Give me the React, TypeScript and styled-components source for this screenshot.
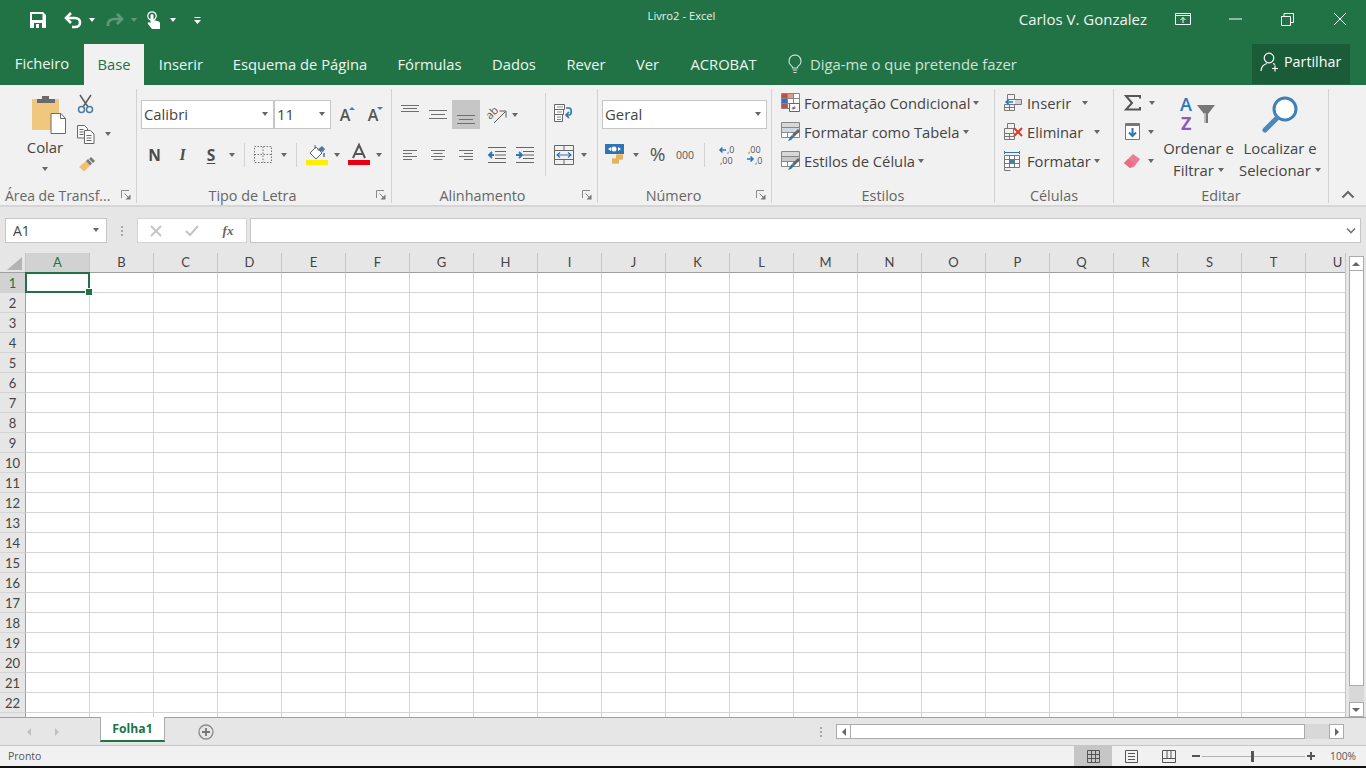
import React from "react";
import styled, { createGlobalStyle } from "styled-components";

const UI = `"Open Sans", "Noto Sans", "Liberation Sans", sans-serif`;
const GREEN = "#217346";
const INK = "#444444";
const MUTED = "#666666";

const Global = createGlobalStyle`
  html, body { margin: 0; padding: 0; background: #fff; overflow: hidden; }
  #root { width: 1366px; height: 768px; }
  * { box-sizing: border-box; }
`;

const Page = styled.div`
  width: 1366px; height: 768px; display: flex; flex-direction: column; overflow: hidden;
  font-family: ${UI}; color: ${INK}; background: #e6e6e6;
`;

/* ---------- title bar ---------- */
const TitleBar = styled.header`
  height: 44px; flex: none; background: ${GREEN}; display: grid; grid-template-columns: 647px 69px 1fr; align-items: start; color: #fff;
`;
const Qat = styled.div`display: flex; align-items: center; height: 40px; padding-left: 30px;`;
const QatSlot = styled.div<{ $ml?: number }>`margin-left: ${p => p.$ml ?? 0}px; display: flex; align-items: center; justify-content: center; flex: none;`;
const DocTitle = styled.div`font-size: 11.2px; line-height: 32px; white-space: nowrap; color: #e8f1ec; text-align: center;`;
const TitleRight = styled.div`display: flex; align-items: center; height: 38px; justify-content: flex-end; padding-right: 19px;`;
const UserName = styled.div`font-size: 15px; color: #f0f5f2; margin-right: 28px; white-space: nowrap;`;
const WinBtn = styled.div<{ $w: number }>`width: ${p => p.$w}px; height: 38px; display: flex; align-items: center; justify-content: flex-end;`;

const WhiteCaret = styled.span<{ $dim?: boolean }>`
  display: block; width: 0; height: 0; border-left: 3.5px solid transparent; border-right: 3.5px solid transparent;
  border-top: 4px solid ${p => (p.$dim ? "#5f9a79" : "#fff")};
`;

/* ---------- tabs ---------- */
const TabBar = styled.nav`height: 41px; flex: none; background: ${GREEN}; display: flex; align-items: stretch; position: relative;`;
const Tab = styled.div<{ $w: number; $active?: boolean; $lift?: boolean }>`
  width: ${p => p.$w}px; display: flex; align-items: center; justify-content: center; font-size: 14.75px; white-space: nowrap;
  padding-bottom: ${p => (p.$lift ? 4 : 2)}px; color: ${p => (p.$active ? GREEN : "#eef5f1")}; background: ${p => (p.$active ? "#f1f1f1" : "transparent")};
`;
const TellMe = styled.div`display: flex; align-items: center; gap: 7px; margin-left: 14px; padding-bottom: 2px; font-size: 14.85px; color: #cfe2d7; white-space: nowrap;`;
const Share = styled.div`
  position: absolute; left: 1252px; top: 0; width: 98px; height: 40px; background: #1a5c38; color: #fff; display: flex; align-items: center; gap: 4px;
  padding: 0 0 5px 8px; font-size: 14.3px;
`;

/* ---------- ribbon ---------- */
const Ribbon = styled.section`height: 122px; flex: none; background: #f1f1f1; display: flex; align-items: flex-start; padding-top: 4px; border-bottom: 2px solid #d6d6d6;`;
const Group = styled.div<{ $w: number }>`width: ${p => p.$w}px; height: 114px; flex: none; display: flex; flex-direction: column; border-right: 1px solid #d2d2d2; position: relative;`;
const GroupBody = styled.div`height: 96px; display: flex;`;
const GroupFooter = styled.div<{ $left?: boolean; $shift?: number }>`
  height: 18px; font-size: ${p => (p.$left ? 13.9 : 14.4)}px; line-height: 22px; color: ${MUTED}; white-space: nowrap;
  text-align: ${p => (p.$left ? "left" : "center")}; padding-left: ${p => (p.$left ? 5 : 0)}px;
  padding-right: ${p => p.$shift ?? 0}px;
`;
const Launcher = styled.span`position: absolute; right: 5px; bottom: 3px; width: 10px; height: 10px; display: block;`;
const Stack = styled.div<{ $pl?: number; $pt?: number; $w?: number; $mt?: number }>`
  display: flex; flex-direction: column; padding-left: ${p => p.$pl ?? 0}px; padding-top: ${p => p.$pt ?? 0}px; margin-top: ${p => p.$mt ?? 0}px; ${p => (p.$w ? `width: ${p.$w}px;` : "")} flex: none;
`;
const Line = styled.div<{ $h?: number; $mt?: number }>`display: flex; align-items: center; height: ${p => p.$h ?? 29}px; margin-top: ${p => p.$mt ?? 0}px;`;
const Slot = styled.div<{ $w: number; $on?: boolean; $h?: number }>`
  width: ${p => p.$w}px; height: ${p => p.$h ?? 29}px; flex: none; display: flex; align-items: center; justify-content: center; position: relative;
  background: ${p => (p.$on ? "#c6c6c6" : "transparent")};
`;
const Caret = styled.span`
  width: 0; height: 0; border-left: 3.5px solid transparent; border-right: 3.5px solid transparent; border-top: 4px solid #666; flex: none; display: inline-block;
`;
const Divider = styled.span<{ $h?: number; $ml?: number; $mr?: number }>`
  width: 1px; height: ${p => p.$h ?? 24}px; background: #d2d2d2; flex: none; margin-left: ${p => p.$ml ?? 0}px; margin-right: ${p => p.$mr ?? 0}px;
`;
const Combo = styled.div<{ $w: number }>`
  width: ${p => p.$w}px; height: 29px; background: #fff; border: 1px solid #c6c6c6;
  display: flex; align-items: center; justify-content: space-between; padding: 0 5px 1px 2px; font-size: 14.85px; color: ${INK}; flex: none;
`;
const BigLabel = styled.div`font-size: 14.85px; color: ${INK}; text-align: center; line-height: 22px; white-space: nowrap; display: flex; align-items: center; justify-content: center; gap: 4px;`;
const ColarCol = styled.div`width: 72px; padding-left: 18px; flex: none; display: flex; flex-direction: column; align-items: center; padding-top: 6px;`;
const ColarIcon = styled.div`margin-left: 6px; margin-bottom: 1px;`;
const CaretSlot = styled.div`height: 22px; display: flex; align-items: center;`;
const FontBtn = styled.span<{ $i?: boolean; $u?: boolean }>`
  font-size: ${p => (p.$i ? 16 : 15.5)}px; font-weight: 700; color: #4d4d4d; font-style: ${p => (p.$i ? "italic" : "normal")};
  font-family: ${p => (p.$i ? `"Liberation Serif", serif` : UI)}; text-decoration: ${p => (p.$u ? "underline" : "none")}; text-underline-offset: 2px;
`;
const GrowA = styled.span`font-size: 16px; color: #555; line-height: 1; font-weight: 600;`;
const SizeMark = styled.span<{ $up?: boolean }>`
  position: absolute; right: 4px; top: 7px; width: 0; height: 0; border-left: 3px solid transparent; border-right: 3px solid transparent;
  ${p => (p.$up ? "border-bottom: 3px solid #4a7ca8;" : "border-top: 3px solid #4a7ca8;")}
`;
const Percent = styled.span`font-size: 19px; color: #555; line-height: 1;`;
const Thousands = styled.span`font-size: 10.5px; color: #555;`;
const StyleRow = styled.div<{ $iw: number }>`
  display: grid; grid-template-columns: ${p => p.$iw}px auto 7px; column-gap: 3px; align-items: center; height: 29px; font-size: 14.75px; color: ${INK}; white-space: nowrap; width: max-content;
`;
const StyleStack = styled.div<{ $pl: number }>`padding-left: ${p => p.$pl}px; margin-top: -1px; display: flex; flex-direction: column;`;
const BigBtn = styled.div<{ $w: number }>`width: ${p => p.$w}px; flex: none; display: flex; flex-direction: column; align-items: center; padding-top: 6px;`;
const BigIcon = styled.div`height: 42px; display: flex; align-items: flex-start; justify-content: center;`;
const Collapse = styled.div`flex: 1; display: flex; align-items: flex-end; justify-content: flex-end; padding: 0 11px 4px 0; height: 114px;`;

/* ---------- formula bar ---------- */
const FormulaBar = styled.div`height: 46px; flex: none; background: #e6e6e6; display: flex; align-items: flex-start; padding: 11px 5px 0 5px;`;
const NameBox = styled.div`
  width: 102px; height: 25px; background: #fff; border: 1px solid #c6c6c6; display: flex; align-items: center; justify-content: space-between;
  padding: 0 7px 1px 7px; font-size: 14px; color: ${INK}; flex: none;
`;
const Dots = styled.div`width: 30px; height: 25px; flex: none; display: flex; flex-direction: column; align-items: center; justify-content: center; gap: 2px;`;
const Dot = styled.span`width: 2px; height: 2px; background: #a8a8a8; display: block;`;
const FxBox = styled.div`
  width: 110px; height: 25px; background: #fff; border: 1px solid #d4d4d4; display: flex; align-items: center; flex: none; margin-right: 3px;
`;
const FxSlot = styled.div`width: 36px; height: 23px; display: flex; align-items: center; justify-content: center;`;
const FxText = styled.span`font-family: "Liberation Serif", serif; font-style: italic; font-weight: 700; font-size: 13px; color: #666;`;
const FormulaInput = styled.div`flex: 1; height: 25px; background: #fff; border: 1px solid #c6c6c6; display: flex; align-items: center; justify-content: flex-end; padding-right: 4px;`;

/* ---------- sheet ---------- */
const SheetWrap = styled.div`height: 464px; flex: none; display: flex; background: #fff;`;
const Sheet = styled.div`width: 1345px; height: 464px; overflow: hidden; flex: none; font-family: "Lato", "Liberation Sans", sans-serif;`;
const Row = styled.div`display: flex; width: 1370px; height: 20px;`;
const Corner = styled.div`width: 26px; height: 20px; flex: none; background: #e6e6e6; border-right: 1px solid #c6c6c6; border-bottom: 1px solid #9f9f9f; display: flex; align-items: flex-end; justify-content: flex-end; padding: 0 3px 2px 0;`;
const ColHead = styled.div<{ $on?: boolean }>`
  width: 64px; height: 20px; flex: none; background: ${p => (p.$on ? "#d2d2d2" : "#e6e6e6")}; color: ${p => (p.$on ? GREEN : "#444")};
  border-right: 1px solid #c6c6c6; border-bottom: 1px solid ${p => (p.$on ? GREEN : "#9f9f9f")}; font-size: 13px; line-height: 19px; text-align: center;
`;
const RowHead = styled.div<{ $on?: boolean }>`
  width: 26px; height: 20px; flex: none; background: ${p => (p.$on ? "#d2d2d2" : "#e6e6e6")}; color: ${p => (p.$on ? GREEN : "#444")};
  border-right: 1px solid ${p => (p.$on ? GREEN : "#9f9f9f")}; border-bottom: 1px solid #d4d4d4; font-size: 13px; line-height: 20px; text-align: center;
`;
const Cell = styled.div`width: 64px; height: 20px; flex: none; border-right: 1px solid #d4d4d4; border-bottom: 1px solid #d4d4d4; background: #fff; position: relative;`;
const Selection = styled.div`position: absolute; left: -1px; top: -1px; width: 65px; height: 21px; border: 2px solid ${GREEN}; z-index: 2;`;
const Handle = styled.span`position: absolute; right: -4px; bottom: -4px; width: 6px; height: 6px; background: ${GREEN}; outline: 1px solid #fff;`;

const VScroll = styled.div`width: 21px; flex: none; background: #e6e6e6; border-left: 1px solid #c6c6c6; display: flex; flex-direction: column; align-items: center; padding-top: 3px;`;
const SBtn = styled.div`
  width: 15px; height: 15px; background: #fff; border: 1px solid #ababab; display: flex; align-items: center; justify-content: center; flex: none;
`;
const VThumb = styled.div`width: 15px; height: 416px; margin-top: -1px; background: #fff; border: 1px solid #ababab; flex: none;`;
const VGap = styled.div`width: 15px; flex: 1; background: #d8d8d8;`;
const ArrowUp = styled.span`width: 0; height: 0; border-left: 4px solid transparent; border-right: 4px solid transparent; border-bottom: 4px solid #666;`;
const ArrowDown = styled.span`width: 0; height: 0; border-left: 4px solid transparent; border-right: 4px solid transparent; border-top: 4px solid #666;`;
const ArrowLeft = styled.span<{ $c?: string }>`width: 0; height: 0; border-top: 4px solid transparent; border-bottom: 4px solid transparent; border-right: 4px solid ${p => p.$c ?? "#666"};`;
const ArrowRight = styled.span<{ $c?: string }>`width: 0; height: 0; border-top: 4px solid transparent; border-bottom: 4px solid transparent; border-left: 4px solid ${p => p.$c ?? "#666"};`;

/* ---------- sheet tabs ---------- */
const SheetTabs = styled.div`height: 28px; flex: none; background: #e6e6e6; border-top: 1px solid #9f9f9f; display: flex; align-items: flex-start;`;
const NavArrows = styled.div`width: 100px; height: 27px; flex: none; display: flex; align-items: center; padding-left: 27px; gap: 24px;`;
const SheetTab = styled.div`
  width: 65px; height: 25px; margin-top: -1px; flex: none; background: #fff; border-left: 1px solid #ababab; border-right: 1px solid #ababab; border-bottom: 2px solid ${GREEN};
  color: ${GREEN}; font-weight: 700; font-size: 12.2px; display: flex; align-items: center; justify-content: center;
`;
const AddSlot = styled.div`width: 82px; height: 27px; flex: none; display: flex; align-items: center; justify-content: center;`;
const TabDots = styled.div`margin-left: auto; width: 21px; height: 27px; flex: none; display: flex; flex-direction: column; align-items: center; justify-content: center; gap: 2px; margin-right: -2px;`;
const HScroll = styled.div`width: 508px; margin-right: 22px; margin-left: 7px; height: 15px; margin-top: 6px; display: flex; flex: none; background: #d8d8d8;`;
const HThumb = styled.div`width: 455px; height: 15px; margin-left: -1px; background: #fff; border: 1px solid #ababab; flex: none;`;
const HGap = styled.div`flex: 1;`;

/* ---------- status ---------- */
const StatusBar = styled.footer`height: 21px; flex: none; background: #f1f1f1; border-top: 1px solid #c6c6c6; display: flex; align-items: center; font-size: 10.5px; color: #555; padding-left: 8px;`;
const StatusRight = styled.div`margin-left: auto; display: flex; align-items: center; height: 20px;`;
const ViewBtn = styled.div<{ $on?: boolean }>`width: 38px; height: 20px; display: flex; align-items: center; justify-content: center; background: ${p => (p.$on ? "#c6c6c6" : "transparent")};`;
const ZoomSlider = styled.div`display: flex; align-items: center; margin-left: 4px; width: 123px; height: 20px;`;
const ZoomSign = styled.span`width: 8px; height: 2px; background: #555; flex: none; position: relative;`;
const ZoomPlusBar = styled.span`position: absolute; left: 3px; top: -3px; width: 2px; height: 8px; background: #555;`;
const ZoomTrack = styled.div`flex: 1; height: 1px; background: #b4b4b4; position: relative; margin: 0 2px;`;
const ZoomThumb = styled.span`position: absolute; left: 49px; top: -5px; width: 3px; height: 11px; background: #555;`;
const ZoomValue = styled.span`width: 51px; text-align: right; padding-right: 10px; font-size: 10.2px; color: #555;`;
const BottomEdge = styled.div`height: 2px; flex: none; background: #111;`;

/* ---------- icons ---------- */
const S = (p: { w: number; h: number; children: React.ReactNode }) => (
  <svg width={p.w} height={p.h} viewBox={`0 0 ${p.w} ${p.h}`} fill="none" style={{ display: "block", flex: "none", overflow: "visible" }}>{p.children}</svg>
);
const Save = () => (
  <S w={16} h={16}>
    <path d="M0 0h13l3 3v13H0z" fill="#fff" />
    <path d="M2 2h10.500v6H2z" fill={GREEN} />
    <path d="M4 11h8v5H4z" fill={GREEN} />
    <path d="M6 12h3v4H6z" fill="#fff" />
  </S>
);
const Undo = () => (
  <S w={18} h={16}><path d="M7 1L2 6l5 5" stroke="#fff" strokeWidth="2.6" /><path d="M3 6h8c3 0 5 2 5 4.500S14 15 11 15H8" stroke="#fff" strokeWidth="2.6" /></S>
);
const Redo = () => (
  <S w={18} h={16}><path d="M11 2l5 5-5 5" stroke="#5f9a79" strokeWidth="2.6" /><path d="M15 7H8c-3 0-6 2-6 5v2" stroke="#5f9a79" strokeWidth="2.6" /></S>
);
const Touch = () => (
  <S w={15} h={19}>
    <circle cx="6" cy="5" r="4.200" stroke="#fff" strokeWidth="1.200" />
    <path d="M4.500 4.500a1.500 1.500 0 013 0V9l4.500 1.300c1.200.4 2 1 2 2.400V18H6l-4-5c-.8-1 .4-2.300 1.500-1.500l1 .8z" fill="#fff" />
  </S>
);
const CustomQat = () => (
  <S w={7} h={7}><path d="M0.500 .5h6" stroke="#fff" /><path d="M0 3h7L3.500 7z" fill="#fff" /></S>
);
const RibbonOpt = () => (
  <S w={16} h={12}><path d="M.5.5h15v11H.5z" stroke="#fff" /><path d="M.5 2.500h15" stroke="#fff" /><path d="M8 10V4.500M5.500 7L8 4.500 10.500 7" stroke="#fff" /></S>
);
const Minimize = () => <S w={13} h={2}><path d="M0 1h13" stroke="#fff" /></S>;
const Restore = () => <S w={13} h={13}><path d="M.5 3.500h9v9h-9z" stroke="#fff" /><path d="M3 3.500v-3h9.500v9H9.500" stroke="#fff" /></S>;
const Close = () => <S w={14} h={14}><path d="M1 1l12 12M13 1L1 13" stroke="#fff" /></S>;
const Bulb = () => (
  <S w={16} h={20}>
    <path d="M8 1a6 6 0 00-3.400 10.900c.6.5.9 1.200.9 2.100h5c0-.9.3-1.600.9-2.100A6 6 0 008 1z" stroke="#d8e7de" strokeWidth="1.100" />
    <path d="M5.800 16h4.400M6.500 18.500h3" stroke="#d8e7de" strokeWidth="1.200" />
  </S>
);
const SharePerson = () => (
  <S w={20} h={20}>
    <circle cx="9" cy="6" r="4.800" stroke="#fff" strokeWidth="1.200" />
    <path d="M1 19c0-4 3-7 6-7.500M13 11.500c.8.300 1.500.7 2 1.200" stroke="#fff" strokeWidth="1.200" />
    <path d="M15 13.500v6M12 16.500h6" stroke="#fff" strokeWidth="1.200" />
  </S>
);
const Clipboard = () => (
  <S w={36} h={40}>
    <path d="M2 4h27v31H2z" fill="#f0c77f" />
    <path d="M7 4h5V1h7v3h6v4H7z" fill="#6a6a6a" />
    <path d="M21 18.500h10l4.500 5v15H21z" fill="#fff" stroke="#6a6a6a" />
    <path d="M30.500 18.500v5h5" stroke="#6a6a6a" />
  </S>
);
const Scissors = () => (
  <S w={18} h={20}>
    <path d="M3 1l8 12M14 1L6 13" stroke="#5c5c5c" strokeWidth="1.500" />
    <circle cx="4.500" cy="15.500" r="3" stroke="#4a7ca8" strokeWidth="1.500" />
    <circle cx="12.500" cy="15.500" r="3" stroke="#4a7ca8" strokeWidth="1.500" />
  </S>
);
const Copy = () => (
  <S w={18} h={19}>
    <path d="M.5.5h7l3 3V13H.5z" fill="#f8f8f8" stroke="#666" />
    <path d="M7.500 5.500h6l3.500 3.500v9.500H7.500z" fill="#fff" stroke="#666" />
    <path d="M2.500 4.500h4M2.500 7h4M2.500 9.500h4M9.500 10.500h5M9.500 13h5M9.500 15.500h5" stroke="#666" />
  </S>
);
const Brush = () => (
  <S w={18} h={16}>
    <path d="M1 11l7-6 4 4.500-6 6z" fill="#eebf75" />
    <path d="M8 5l2-2 4 4.500-2 2z" fill="#777" />
    <path d="M11 3l2-2 4 4-2 2z" fill="#777" />
  </S>
);
const Launch = () => (
  <S w={10} h={10}>
    <path d="M.5 8V.5H8" stroke="#8a8a8a" />
    <path d="M3.500 3.500L8 8" stroke="#777" />
    <path d="M9.500 4.500v5h-5z" fill="#777" />
  </S>
);
const Borders = () => (
  <S w={18} h={17}>
    <path d="M.5.500h17v16H.5zM.5 8.500h17M9 .5v16" stroke="#777" strokeDasharray="1.500 1.500" />
  </S>
);
const FillBucket = () => (
  <S w={22} h={21}>
    <path d="M4 9l6-6 6 6-6 6z" fill="#fff" stroke="#666" />
    <path d="M9 5V1" stroke="#666" />
    <path d="M11 6l5-4 3 3-2 3" fill="#4a7ca8" />
    <path d="M18 9v4" stroke="#4a7ca8" strokeWidth="1.600" />
    <path d="M0 16h22v5H0z" fill="#ffee00" />
  </S>
);
const FontColor = () => (
  <S w={22} h={21}>
    <path d="M5 14L11 1l6 13M7.500 10h7" stroke="#555" strokeWidth="2" />
    <path d="M0 16h22v5H0z" fill="#e60012" />
  </S>
);
const Lines = ({ rows, widths = [18, 14, 18] }: { rows: number[]; widths?: number[] }) => (
  <S w={18} h={22}>
    {rows.map((y, i) => {
      const w = widths[i] ?? 18;
      return <path key={y} d={`M${(18 - w) / 2} ${y + 0.5}h${w}`} stroke="#6f6f6f" />;
    })}
  </S>
);
const HLines = ({ align }: { align: "l" | "c" | "r" }) => {
  const ws = [14, 9, 14, 9];
  return (
    <S w={14} h={12}>
      {ws.map((w, i) => {
        const x = align === "l" ? 0 : align === "c" ? (14 - w) / 2 : 14 - w;
        return <path key={i} d={`M${x} ${i * 3 + 1.500}h${w}`} stroke="#6f6f6f" />;
      })}
    </S>
  );
};
const Orient = () => (
  <S w={20} h={20}>
    <text x="0" y="0" transform="translate(3 15) rotate(-45)" fontFamily="Open Sans" fontSize="11" fill="#5a5a5a">ab</text>
    <path d="M7 18L18 7M12.500 6H19v6.500" stroke="#5a5a5a" />
  </S>
);
const Indent = ({ inc }: { inc?: boolean }) => (
  <S w={18} h={16}>
    <path d="M0 .5h18M7 4.500h11M7 8h11M7 11.500h11M0 15.500h18" stroke="#666" />
    {inc
      ? <path d="M0 8h5M3 5l3 3-3 3" stroke="#2f75b5" strokeWidth="1.800" />
      : <path d="M6 8H1M4 5L1 8l3 3" stroke="#2f75b5" strokeWidth="1.800" />}
  </S>
);
const Wrap = () => (
  <S w={20} h={19}>
    <path d="M.5.5h10v5H.5zM.5 5.500h9v5H.5zM.5 10.500h8v7H.5z" stroke="#666" fill="#fff" />
    <path d="M3 3h6M3 8h5M3 13h4M3 15.500h4" stroke="#888" />
    <path d="M12 4h3c3 0 3 7 0 7h-2M15 8l-3 3 3 3" stroke="#2f75b5" strokeWidth="1.600" />
  </S>
);
const Merge = () => (
  <S w={20} h={20}>
    <path d="M.5.5h19v19H.5zM.5 5.500h19M.5 14.500h19M10 .5v5M10 14.500v5" stroke="#666" />
    <path d="M3 10h14M6 7.500L3 10l3 2.500M14 7.500l3 2.500-3 2.500" stroke="#2f75b5" strokeWidth="1.200" />
  </S>
);
const Currency = () => (
  <S w={21} h={21}>
    <path d="M0 0h19v10H0z" fill="#2f75b5" />
    <circle cx="9" cy="5" r="2.500" fill="#fff" />
    <path d="M3 5l3-2v4zM16 5l-3-2v4z" fill="#fff" />
    <path d="M7 14h7v6H7zM11 10h7v6h-7z" fill="#f0c77f" />
    <path d="M7 16h7M7 18h7M11 12h7M11 14h7" stroke="#c98f2f" strokeWidth=".7" />
  </S>
);
const Dec = ({ more }: { more?: boolean }) => (
  <S w={18} h={22}>
    <text x={more ? "2" : "9"} y="9" fontFamily="Open Sans" fontSize="9" fill="#555">{more ? ",00" : ",0"}</text>
    <text x={more ? "9" : "2"} y="20" fontFamily="Open Sans" fontSize="9" fill="#555">{more ? ",0" : ",00"}</text>
    {more
      ? <path d="M1 15h6M4.500 12.500L7 15l-2.500 2.500" stroke="#2f75b5" strokeWidth="1.500" />
      : <path d="M8 6H2M4.500 3.500L2 6l2.500 2.500" stroke="#2f75b5" strokeWidth="1.500" />}
  </S>
);
const gridLines = "M.5.5h18v15H.5zM.5 5.500h18M.5 10.500h18M6.500.5v15M12.500.5v15";
const CondFormat = () => (
  <S w={19} h={19}>
    <path d={gridLines} stroke="#888" fill="#fff" />
    <path d="M1 1h5v4H1z" fill="#c0504d" />
    <path d="M7 1h5v4H7z" fill="#e39a7f" />
    <path d="M1 6h5v4H1z" fill="#2f75b5" />
    <path d="M1 11h5v4H1z" fill="#c0504d" />
    <path d="M8.500 10.500h10v8h-10z" fill="#fff" stroke="#666" />
    <text x="10.500" y="17.500" fontFamily="Open Sans" fontSize="8" fill="#444">≠</text>
  </S>
);
const TableBrush = ({ fill = "#cfd7e2" }: { fill?: string }) => (
  <S w={19} h={19}>
    <path d={gridLines} stroke="#888" fill="#fff" />
    <path d="M1 6h17v4H1z" fill={fill} />
    <path d="M1 1h17v4H1z" fill="#d8d8d8" />
    <path d="M17 7l2 2-6 6-2-2z" fill="#666" />
    <path d="M11 13l2 2-3 3-3 1c1-1 1-3 4-6z" fill="#2f75b5" />
  </S>
);
const CellInsert = () => (
  <S w={18} h={18}>
    <path d="M3.500.5h7v5h-7zM3.500 5.500h14v5h-14zM.5 10.500h10v6H.5zM.5 13.500h10M5.500 10.500v6" stroke="#777" />
    <path d="M11 6h6v4h-6z" fill="#d0d0d0" />
    <path d="M9 8H2M5 5.500L2 8l3 2.500" stroke="#2f75b5" strokeWidth="1.500" />
  </S>
);
const CellDelete = () => (
  <S w={19} h={18}>
    <path d="M3.500.5h7v5h-7zM.5 5.500h9v5h-9zM.5 10.500h10v6H.5zM.5 13.500h10M5.500 10.500v6" stroke="#777" />
    <path d="M10 5l8 8M18 5l-8 8" stroke="#d83b2b" strokeWidth="2" />
  </S>
);
const CellFormat = () => (
  <S w={18} h={20}>
    <path d="M0 1.500h16M.5 0v3M15.500 0v3" stroke="#2f75b5" />
    <path d="M.5 4.500h15v12H.5zM.5 8.500h15M.5 12.500h15M5.500 4.500v12M10.500 4.500v12" stroke="#777" fill="#fff" />
    <path d="M5.500 8.500h5v4h-5z" fill="#4a7ca8" />
    <path d="M.5 16.500v3h6" stroke="#777" />
  </S>
);
const Sigma = () => <S w={17} h={16}><path d="M16 3.500V1H2l6 7-6 6.500h14V12" stroke="#555" strokeWidth="2" /></S>;
const FillDown = () => (
  <S w={15} h={17}>
    <path d="M.5.5h14v16H.5z" fill="#fff" stroke="#777" />
    <path d="M.5 1h14v2H.5z" fill="#777" />
    <path d="M7.500 5v8M4 9.500l3.500 3.500L11 9.500" stroke="#2f75b5" strokeWidth="2" />
  </S>
);
const Eraser = () => (
  <S w={18} h={16}>
    <path d="M10 1l7 5-6 8-4 1-6-5z" fill="#ed7d96" />
    <path d="M1 10l4-4 6 4-4 5z" fill="#e86d86" />
  </S>
);
const SortFilter = () => (
  <S w={38} h={36}>
    <text x="0" y="16" fontFamily="Open Sans" fontSize="18" fontWeight="600" fill="#2f75b5">A</text>
    <text x="1" y="35" fontFamily="Open Sans" fontSize="18" fontWeight="700" fill="#8e5bbd">Z</text>
    <path d="M17 10h18l-7 9v9h-4v-9z" fill="#777" />
    <path d="M24 18h2v10h-2z" fill="#bbb" />
  </S>
);
const Magnifier = () => (
  <S w={37} h={38}>
    <circle cx="23" cy="14" r="11" stroke="#3f7fb8" strokeWidth="3" fill="#fff" />
    <path d="M15 23L3 35" stroke="#4a87bd" strokeWidth="5" strokeLinecap="round" />
  </S>
);
const Chevron = () => <S w={14} h={9}><path d="M1.500 7.500L7 2l5.500 5.500" stroke="#666" strokeWidth="2" /></S>;
const X = () => <S w={12} h={12}><path d="M1 1l10 10M11 1L1 11" stroke="#c4c4c4" strokeWidth="1.800" /></S>;
const Check = () => <S w={14} h={12}><path d="M1 6l4 4 8-9" stroke="#c4c4c4" strokeWidth="2" /></S>;
const ChevDown = () => <S w={10} h={7}><path d="M1 1.500l4 4 4-4" stroke="#777" strokeWidth="1.600" /></S>;
const Tri = () => <S w={15} h={13}><path d="M15 0v13H0z" fill="#b4b4b4" /></S>;
const PlusCircle = () => (
  <S w={16} h={16}><circle cx="8" cy="8" r="7" stroke="#8a8a8a" strokeWidth="1.300" /><path d="M8 4v8M4 8h8" stroke="#777" strokeWidth="1.800" /></S>
);
const ViewNormal = () => <S w={13} h={13}><path d="M.5.5h12v12H.5zM.5 4.500h12M.5 8.500h12M4.500.5v12M8.500.5v12" stroke="#555" /></S>;
const ViewPage = () => <S w={13} h={13}><path d="M.5.5h12v12H.5z" stroke="#555" /><path d="M3 3.500h7M3 6.500h7M3 9.500h7" stroke="#555" /></S>;
const ViewBreak = () => <S w={14} h={13}><path d="M.5.5h13v12H.5zM.5 8.500h13M5 .5v8M9 .5v8" stroke="#555" /></S>;

/* ---------- data ---------- */
const TABS: { t: string; w: number; active?: boolean; lift?: boolean }[] = [
  { t: "Ficheiro", w: 84, lift: true },
  { t: "Base", w: 60, active: true },
  { t: "Inserir", w: 74 },
  { t: "Esquema de Página", w: 164 },
  { t: "Fórmulas", w: 95 },
  { t: "Dados", w: 74 },
  { t: "Rever", w: 70 },
  { t: "Ver", w: 53 },
  { t: "ACROBAT", w: 99 },
];
const COLS = "ABCDEFGHIJKLMNOPQRSTU".split("");
const ROWS = Array.from({ length: 23 }, (_, i) => i + 1);
const LAST_LABELLED_ROW = 22;

export default function App() {
  return (
    <Page>
      <Global />
      <TitleBar>
        <Qat>
          <QatSlot><Save /></QatSlot>
          <QatSlot $ml={18}><Undo /></QatSlot>
          <QatSlot $ml={7}><WhiteCaret /></QatSlot>
          <QatSlot $ml={11}><Redo /></QatSlot>
          <QatSlot $ml={7}><WhiteCaret $dim /></QatSlot>
          <QatSlot $ml={9}><Touch /></QatSlot>
          <QatSlot $ml={9}><WhiteCaret /></QatSlot>
          <QatSlot $ml={18}><CustomQat /></QatSlot>
        </Qat>
        <DocTitle>Livro2 - Excel</DocTitle>
        <TitleRight>
          <UserName>Carlos V. Gonzalez</UserName>
          <WinBtn $w={16}><RibbonOpt /></WinBtn>
          <WinBtn $w={51}><Minimize /></WinBtn>
          <WinBtn $w={52}><Restore /></WinBtn>
          <WinBtn $w={53}><Close /></WinBtn>
        </TitleRight>
      </TitleBar>

      <TabBar>
        {TABS.map(t => <Tab key={t.t} $w={t.w} $active={t.active} $lift={t.lift}>{t.t}</Tab>)}
        <TellMe><Bulb />Diga-me o que pretende fazer</TellMe>
        <Share><SharePerson />Partilhar</Share>
      </TabBar>

      <Ribbon>
        <Group $w={137}>
          <GroupBody>
            <ColarCol>
              <ColarIcon><Clipboard /></ColarIcon>
              <BigLabel>Colar</BigLabel>
              <CaretSlot><Caret /></CaretSlot>
            </ColarCol>
            <Stack>
              <Line $h={30}><Slot $w={28}><Scissors /></Slot></Line>
              <Line $h={30}><Slot $w={28}><Copy /></Slot><Slot $w={16}><Caret /></Slot></Line>
              <Line $h={30}><Slot $w={30}><Brush /></Slot></Line>
            </Stack>
          </GroupBody>
          <GroupFooter $left>Área de Transf...</GroupFooter>
          <Launcher><Launch /></Launcher>
        </Group>

        <Group $w={255}>
          <GroupBody>
            <Stack $pl={4} $pt={11}>
              <Line>
                <Combo $w={133}>Calibri<Caret /></Combo>
                <Combo $w={57}>11<Caret /></Combo>
                <Slot $w={28}><GrowA>A</GrowA><SizeMark $up /></Slot>
                <Slot $w={28}><GrowA>A</GrowA><SizeMark /></Slot>
              </Line>
              <Line $mt={11}>
                <Slot $w={27}><FontBtn>N</FontBtn></Slot>
                <Slot $w={29}><FontBtn $i>I</FontBtn></Slot>
                <Slot $w={28}><FontBtn $u>S</FontBtn></Slot>
                <Slot $w={13}><Caret /></Slot>
                <Divider $ml={6} />
                <Slot $w={36}><Borders /></Slot>
                <Slot $w={6}><Caret /></Slot>
                <Divider $ml={9} $mr={7} />
                <Slot $w={26}><FillBucket /></Slot>
                <Slot $w={14}><Caret /></Slot>
                <Slot $w={30}><FontColor /></Slot>
                <Slot $w={10}><Caret /></Slot>
              </Line>
            </Stack>
          </GroupBody>
          <GroupFooter $shift={23}>Tipo de Letra</GroupFooter>
          <Launcher><Launch /></Launcher>
        </Group>

        <Group $w={206}>
          <GroupBody>
            <Stack $pl={4} $pt={11} $w={153}>
              <Line>
                <Slot $w={28}><Lines rows={[1, 4, 7]} /></Slot>
                <Slot $w={28}><Lines rows={[6, 10, 14]} /></Slot>
                <Slot $w={28} $on><Lines rows={[11, 15, 19]} /></Slot>
                <Slot $w={34}><Orient /></Slot>
                <Slot $w={2}><Caret /></Slot>
              </Line>
              <Line $mt={11}>
                <Slot $w={28}><HLines align="l" /></Slot>
                <Slot $w={28}><HLines align="c" /></Slot>
                <Slot $w={28}><HLines align="r" /></Slot>
                <Slot $w={34}><Indent /></Slot>
                <Slot $w={22}><Indent inc /></Slot>
              </Line>
            </Stack>
            <Stack $pt={4}><Divider $h={83} /></Stack>
            <Stack $pt={9}>
              <Slot $w={36} $h={30}><Wrap /></Slot>
              <Line $mt={12} $h={30}>
                <Slot $w={36} $h={30}><Merge /></Slot>
                <Slot $w={4}><Caret /></Slot>
              </Line>
            </Stack>
          </GroupBody>
          <GroupFooter $shift={24}>Alinhamento</GroupFooter>
          <Launcher><Launch /></Launcher>
        </Group>

        <Group $w={174}>
          <GroupBody>
            <Stack $pl={4} $pt={11}>
              <Combo $w={165}>Geral<Caret /></Combo>
              <Line $mt={11}>
                <Slot $w={26}><Currency /></Slot>
                <Slot $w={15}><Caret /></Slot>
                <Slot $w={29}><Percent>%</Percent></Slot>
                <Slot $w={26}><Thousands>000</Thousands></Slot>
                <Divider $ml={6} />
                <Slot $w={43}><Dec /></Slot>
                <Slot $w={13}><Dec more /></Slot>
              </Line>
            </Stack>
          </GroupBody>
          <GroupFooter $shift={22}>Número</GroupFooter>
          <Launcher><Launch /></Launcher>
        </Group>

        <Group $w={223}>
          <GroupBody>
            <StyleStack $pl={9}>
              <StyleRow $iw={20}><CondFormat />Formatação Condicional<Caret /></StyleRow>
              <StyleRow $iw={20}><TableBrush />Formatar como Tabela<Caret /></StyleRow>
              <StyleRow $iw={20}><TableBrush fill="#c8c8c8" />Estilos de Célula<Caret /></StyleRow>
            </StyleStack>
          </GroupBody>
          <GroupFooter>Estilos</GroupFooter>
        </Group>

        <Group $w={119}>
          <GroupBody>
            <StyleStack $pl={9}>
              <StyleRow $iw={20}><CellInsert />Inserir&nbsp;&nbsp;<Caret /></StyleRow>
              <StyleRow $iw={20}><CellDelete />Eliminar&nbsp;&nbsp;<Caret /></StyleRow>
              <StyleRow $iw={20}><CellFormat />Formatar<Caret /></StyleRow>
            </StyleStack>
          </GroupBody>
          <GroupFooter>Células</GroupFooter>
        </Group>

        <Group $w={215}>
          <GroupBody>
            <Stack $w={45} $mt={-1}>
              <Line><Slot $w={36}><Sigma /></Slot><Slot $w={4}><Caret /></Slot></Line>
              <Line><Slot $w={36}><FillDown /></Slot><Slot $w={1}><Caret /></Slot></Line>
              <Line><Slot $w={36}><Eraser /></Slot><Slot $w={1}><Caret /></Slot></Line>
            </Stack>
            <BigBtn $w={79}>
              <BigIcon><SortFilter /></BigIcon>
              <BigLabel>Ordenar e</BigLabel>
              <BigLabel>Filtrar<Caret /></BigLabel>
            </BigBtn>
            <BigBtn $w={84}>
              <BigIcon><Magnifier /></BigIcon>
              <BigLabel>Localizar e</BigLabel>
              <BigLabel>Selecionar<Caret /></BigLabel>
            </BigBtn>
          </GroupBody>
          <GroupFooter>Editar</GroupFooter>
        </Group>

        <Collapse><Chevron /></Collapse>
      </Ribbon>

      <FormulaBar>
        <NameBox>A1<Caret /></NameBox>
        <Dots><Dot /><Dot /><Dot /></Dots>
        <FxBox>
          <FxSlot><X /></FxSlot>
          <FxSlot><Check /></FxSlot>
          <FxSlot><FxText>fx</FxText></FxSlot>
        </FxBox>
        <FormulaInput><ChevDown /></FormulaInput>
      </FormulaBar>

      <SheetWrap>
        <Sheet>
          <Row>
            <Corner><Tri /></Corner>
            {COLS.map((c, i) => <ColHead key={c} $on={i === 0}>{c}</ColHead>)}
          </Row>
          {ROWS.map(r => (
            <Row key={r}>
              <RowHead $on={r === 1}>{r <= LAST_LABELLED_ROW ? r : null}</RowHead>
              {COLS.map((c, i) => (
                <Cell key={c}>{r === 1 && i === 0 && <Selection><Handle /></Selection>}</Cell>
              ))}
            </Row>
          ))}
        </Sheet>
        <VScroll>
          <SBtn><ArrowUp /></SBtn>
          <VThumb />
          <VGap />
          <SBtn><ArrowDown /></SBtn>
        </VScroll>
      </SheetWrap>

      <SheetTabs>
        <NavArrows><ArrowLeft $c="#c0c0c0" /><ArrowRight $c="#c0c0c0" /></NavArrows>
        <SheetTab>Folha1</SheetTab>
        <AddSlot><PlusCircle /></AddSlot>
        <TabDots><Dot /><Dot /><Dot /></TabDots>
        <HScroll>
          <SBtn><ArrowLeft /></SBtn>
          <HThumb />
          <HGap />
          <SBtn><ArrowRight /></SBtn>
        </HScroll>
      </SheetTabs>

      <StatusBar>
        Pronto
        <StatusRight>
          <ViewBtn $on><ViewNormal /></ViewBtn>
          <ViewBtn><ViewPage /></ViewBtn>
          <ViewBtn><ViewBreak /></ViewBtn>
          <ZoomSlider>
            <ZoomSign />
            <ZoomTrack><ZoomThumb /></ZoomTrack>
            <ZoomSign><ZoomPlusBar /></ZoomSign>
          </ZoomSlider>
          <ZoomValue>100%</ZoomValue>
        </StatusRight>
      </StatusBar>
      <BottomEdge />
    </Page>
  );
}
